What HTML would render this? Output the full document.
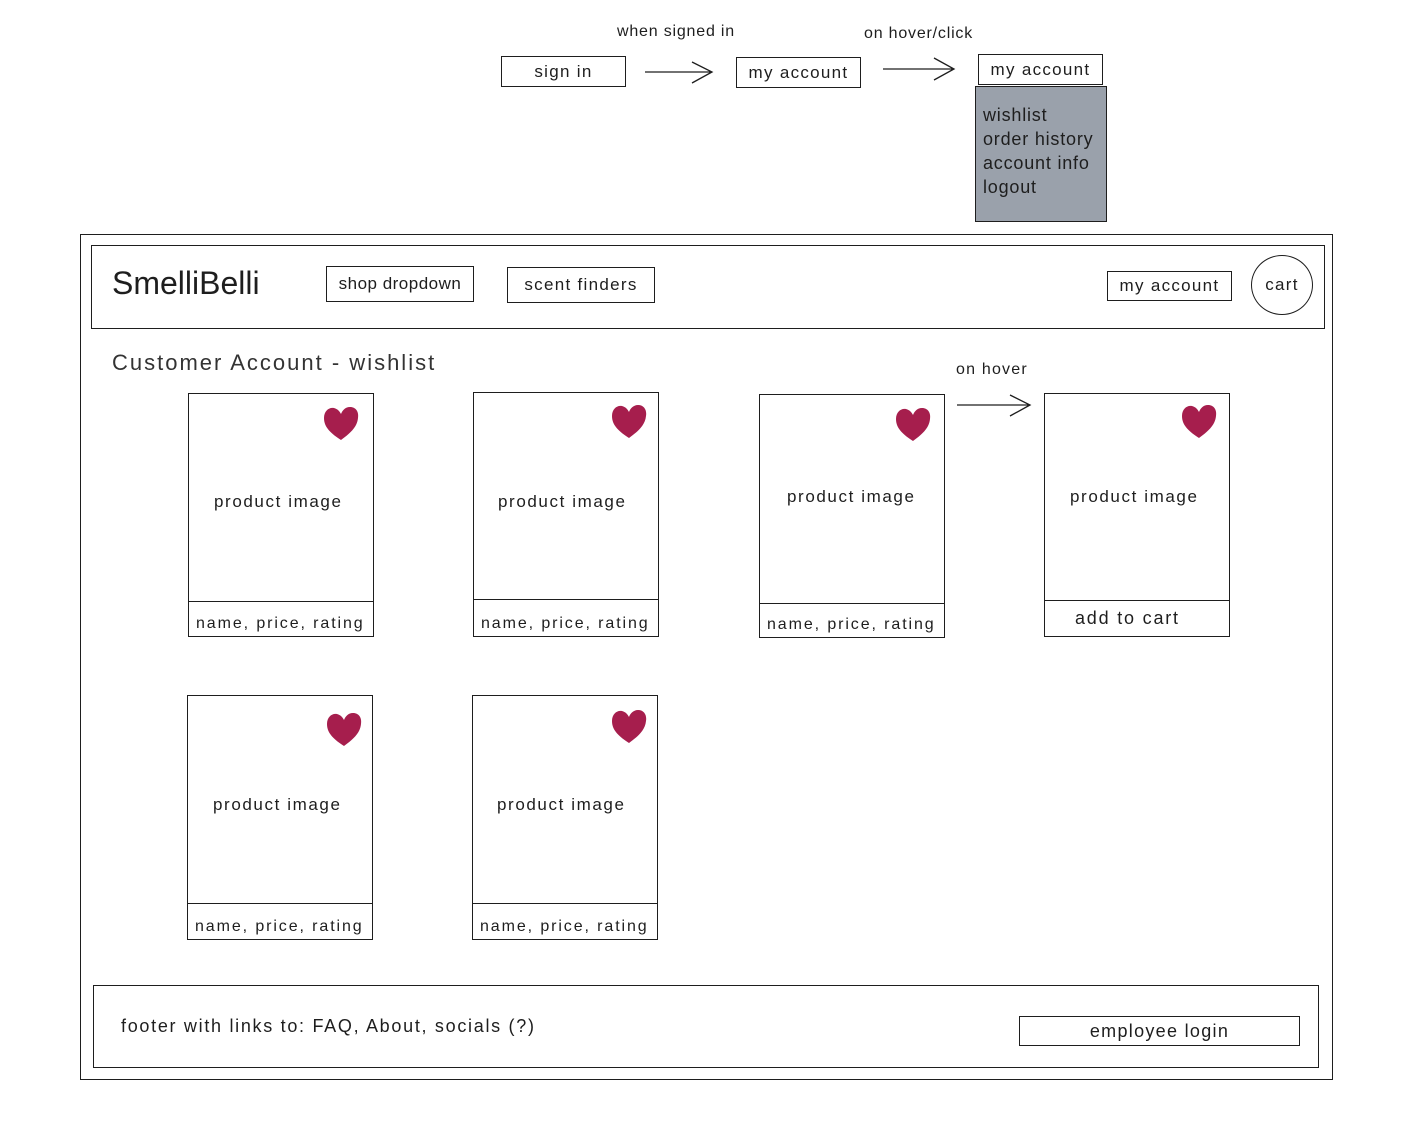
<!DOCTYPE html>
<html><head><meta charset="utf-8"><style>
body{margin:0;width:1409px;height:1134px;background:#fff;position:relative;overflow:hidden;font-family:"Liberation Sans",sans-serif;color:#1e1e1e}
.b{position:absolute;border:1.5px solid #1e1e1e;box-sizing:border-box}
.t{position:absolute;white-space:nowrap;font-size:17px;letter-spacing:1.6px}
.c{display:flex;align-items:center;justify-content:center;font-size:17px;letter-spacing:1.3px}
.h{position:absolute;width:38px;height:36px}
.ar{position:absolute}
.n{font-size:16px;letter-spacing:1.9px}
</style></head><body>
<div class="t" style="left:617px;top:23px;font-size:16px;letter-spacing:0.8px">when signed in</div>
<div class="t" style="left:864px;top:25px;font-size:16px;letter-spacing:0.8px">on hover/click</div>
<div class="b c" style="left:501px;top:56px;width:125px;height:31px">sign in</div>
<svg class="ar" style="left:640px;top:58px" width="80" height="28"><path d="M5 14H72M52 4L72 14L52 25" stroke="#1e1e1e" stroke-width="1.3" fill="none"/></svg>
<div class="b c" style="left:736px;top:57px;width:125px;height:31px">my account</div>
<svg class="ar" style="left:878px;top:55px" width="80" height="28"><path d="M5 14H76M56 3L76 14L56 25" stroke="#1e1e1e" stroke-width="1.3" fill="none"/></svg>
<div class="b c" style="left:978px;top:54px;width:125px;height:31px">my account</div>
<div class="b" style="left:975px;top:86px;width:132px;height:136px;background:#9aa1ab"></div>
<div class="t" style="left:983px;top:103px;line-height:24px;font-size:18px;letter-spacing:0.8px">wishlist<br>order history<br>account info<br>logout</div>

<div class="b" style="left:80px;top:234px;width:1253px;height:846px"></div>
<div class="b" style="left:91px;top:245px;width:1234px;height:84px"></div>
<div class="t" style="left:112px;top:265px;font-size:32px;letter-spacing:0">SmelliBelli</div>
<div class="b c" style="left:326px;top:266px;width:148px;height:36px;letter-spacing:0.5px">shop dropdown</div>
<div class="b c" style="left:507px;top:267px;width:148px;height:36px">scent finders</div>
<div class="b c" style="left:1107px;top:271px;width:125px;height:30px">my account</div>
<div class="b c" style="left:1251px;top:255px;width:62px;height:60px;border-radius:50%">cart</div>

<div class="t" style="left:112px;top:350px;font-size:22px;color:#333;letter-spacing:2px">Customer Account - wishlist</div>
<div class="t" style="left:956px;top:361px;font-size:16px;letter-spacing:1.2px">on hover</div>
<svg class="ar" style="left:952px;top:392px" width="85" height="28"><path d="M5 13H78M58 3L78 13L58 24" stroke="#1e1e1e" stroke-width="1.3" fill="none"/></svg>

<div class="b" style="left:188px;top:393px;width:186px;height:244px"></div>
<div class="b" style="left:188px;top:393px;width:186px;height:209px"></div>
<div class="t" style="left:214px;top:492px">product image</div>
<div class="t n" style="left:196px;top:615px">name, price, rating</div>

<div class="b" style="left:473px;top:392px;width:186px;height:245px"></div>
<div class="b" style="left:473px;top:392px;width:186px;height:208px"></div>
<div class="t" style="left:498px;top:492px">product image</div>
<div class="t n" style="left:481px;top:615px">name, price, rating</div>

<div class="b" style="left:759px;top:394px;width:186px;height:244px"></div>
<div class="b" style="left:759px;top:394px;width:186px;height:210px"></div>
<div class="t" style="left:787px;top:487px">product image</div>
<div class="t n" style="left:767px;top:616px">name, price, rating</div>

<div class="b" style="left:1044px;top:393px;width:186px;height:244px"></div>
<div class="b" style="left:1044px;top:393px;width:186px;height:208px"></div>
<div class="t" style="left:1070px;top:487px">product image</div>
<div class="t" style="left:1075px;top:608px;font-size:18px;letter-spacing:1.8px">add to cart</div>

<div class="b" style="left:187px;top:695px;width:186px;height:245px"></div>
<div class="b" style="left:187px;top:695px;width:186px;height:209px"></div>
<div class="t" style="left:213px;top:795px">product image</div>
<div class="t n" style="left:195px;top:918px">name, price, rating</div>

<div class="b" style="left:472px;top:695px;width:186px;height:245px"></div>
<div class="b" style="left:472px;top:695px;width:186px;height:209px"></div>
<div class="t" style="left:497px;top:795px">product image</div>
<div class="t n" style="left:480px;top:918px">name, price, rating</div>

<svg width="0" height="0" style="position:absolute"><defs><path id="hp" d="M19 34C10 28 2 22 2 12C2 5 7 1 12 2C16 3 18 6 19 8C20 5 23 1 28 1C34 1 37 6 36 12C35 22 27 28 19 34Z" fill="#a61e4d"/></defs></svg>
<svg class="h" style="left:322px;top:406px"><use href="#hp"/></svg>
<svg class="h" style="left:610px;top:404px"><use href="#hp"/></svg>
<svg class="h" style="left:894px;top:407px"><use href="#hp"/></svg>
<svg class="h" style="left:1180px;top:404px"><use href="#hp"/></svg>
<svg class="h" style="left:325px;top:712px"><use href="#hp"/></svg>
<svg class="h" style="left:610px;top:709px"><use href="#hp"/></svg>

<div class="b" style="left:93px;top:985px;width:1226px;height:83px"></div>
<div class="t" style="left:121px;top:1016px;font-size:18px;letter-spacing:1.7px">footer with links to: FAQ, About, socials (?)</div>
<div class="b c" style="left:1019px;top:1016px;width:281px;height:30px;font-size:18px">employee login</div>
</body></html>
